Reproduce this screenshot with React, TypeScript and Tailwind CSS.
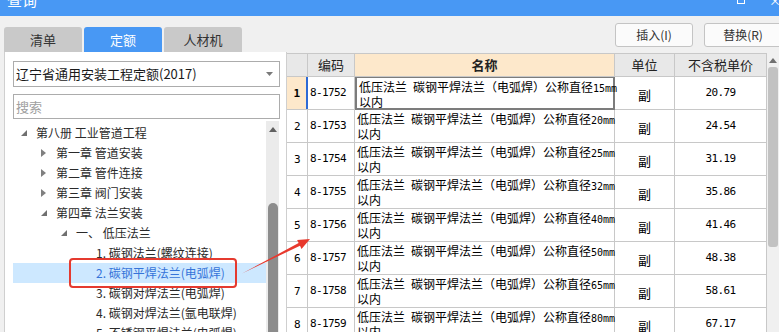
import React from "react";

const rows = [
  { code: "8-1752", size: "15", price: "20.79" },
  { code: "8-1753", size: "20", price: "24.54" },
  { code: "8-1754", size: "25", price: "31.19" },
  { code: "8-1755", size: "32", price: "35.86" },
  { code: "8-1756", size: "40", price: "41.46" },
  { code: "8-1757", size: "50", price: "48.38" },
  { code: "8-1758", size: "65", price: "58.61" },
  { code: "8-1759", size: "80", price: "67.17" },
];

type Node = { level: number; text: string; icon: "open" | "closed" | "none"; selected?: boolean };

const tree: Node[] = [
  { level: 0, text: "第八册 工业管道工程", icon: "open" },
  { level: 1, text: "第一章 管道安装", icon: "closed" },
  { level: 1, text: "第二章 管件连接", icon: "closed" },
  { level: 1, text: "第三章 阀门安装", icon: "closed" },
  { level: 1, text: "第四章 法兰安装", icon: "open" },
  { level: 2, text: "一、  低压法兰", icon: "open" },
  { level: 3, text: "1. 碳钢法兰(螺纹连接)", icon: "none" },
  { level: 3, text: "2. 碳钢平焊法兰(电弧焊)", icon: "none", selected: true },
  { level: 3, text: "3. 碳钢对焊法兰(电弧焊)", icon: "none" },
  { level: 3, text: "4. 碳钢对焊法兰(氩电联焊)", icon: "none" },
  { level: 3, text: "5. 不锈钢平焊法兰(电弧焊)", icon: "none" },
];

const indent = ["pl-[5px]", "pl-[25px]", "pl-[45px]", "pl-[65px]"];

function Tri({ kind }: { kind: "open" | "closed" | "none" }) {
  if (kind === "open")
    return (
      <svg width="6" height="6" viewBox="0 0 6 6">
        <polygon points="6,0 6,6 0,6" fill="#707070" />
      </svg>
    );
  if (kind === "closed")
    return (
      <svg width="5" height="8" viewBox="0 0 5 8">
        <polygon points="0,0 5,4 0,8" fill="#808080" />
      </svg>
    );
  return null;
}

const mono = "font-['DejaVu_Sans_Mono',monospace] text-[11px] tracking-[-0.6px]";

export default function App() {
  return (
    <div className="relative w-[779px] h-[332px] overflow-hidden bg-[#f0f0f0] font-['Noto_Sans_CJK_SC',sans-serif] text-[#222]">
      {/* title bar */}
      <div className="relative h-[16px] bg-[#4898f4] overflow-hidden flex">
        <div className="pl-[7px] -mt-[9px] text-[15px] leading-[18px] text-white">查询</div>
        <div className="flex-1" />
        <div className="-mt-[6px] mr-[24px] w-[8px] h-[10px] border-[1.5px] border-white" />
        <div className="-mt-[4px] text-white text-[12px] leading-[10px] -mr-[2px]">×</div>
      </div>

      <div className="flex h-[316px]">
        {/* left column */}
        <div className="w-[287px] pl-[4px] pt-[11px] flex flex-col">
          <div className="flex gap-[2px] h-[25px] shrink-0">
            <div className="w-[78px] rounded-t-[3px] bg-[#c9c9c9] flex items-center justify-center text-[13px] text-[#333]">清单</div>
            <div className="w-[78px] rounded-t-[3px] bg-[#4898f4] flex items-center justify-center text-[13px] text-white">定额</div>
            <div className="w-[78px] rounded-t-[3px] bg-[#c9c9c9] flex items-center justify-center text-[13px] text-[#333]">人材机</div>
          </div>
          <div className="flex-1 min-h-0 bg-white border-l border-r border-[#cfcfcf] pl-[8px] pt-[9px] flex flex-col overflow-hidden">
            <div className="shrink-0 w-[267px] h-[26px] border border-[#acacac] flex items-center pl-[2px] pr-[6px] text-[13px] text-[#1a1a1a]">
              <span className="flex-1">辽宁省通用安装工程定额(2017)</span>
              <svg width="7" height="4" viewBox="0 0 7 4">
                <polygon points="0,0 7,0 3.5,4" fill="#7a7a7a" />
              </svg>
            </div>
            <div className="shrink-0 mt-[7px] w-[267px] h-[25px] border border-[#acacac] flex items-center pl-[2px] text-[13px] text-[#a0a0a0]">
              搜索
            </div>
            <div className="mt-[2px] flex flex-1 min-h-0">
              <div className="w-[253px] pt-[2px]">
                {tree.map((n, i) => (
                  <div
                    key={i}
                    className={`h-[20px] shrink-0 flex items-center text-[12px] whitespace-nowrap ${indent[n.level]} ${
                      n.selected ? "bg-[#cde8ff] text-[#3574d9]" : "text-[#2a2a2a]"
                    }`}
                  >
                    <div className="w-[18px] pl-[3px] flex items-center">
                      <Tri kind={n.icon} />
                    </div>
                    <span>{n.text}</span>
                  </div>
                ))}
              </div>
              <div className="w-[13px] bg-[#ebebeb] flex flex-col items-center">
                <div className="h-[14px] flex items-center pt-[2px]">
                  <svg width="8" height="5" viewBox="0 0 8 5">
                    <polygon points="0,5 8,5 4,0" fill="#606060" />
                  </svg>
                </div>
                <div className="mt-[68px] flex-1 w-[10px] bg-[#8c8c8c] rounded-t-[5px]" />
              </div>
            </div>
          </div>
        </div>

        {/* right column */}
        <div className="flex-1 flex flex-col overflow-hidden">
          <div className="shrink-0 h-[37px] pt-[7px] pl-[328px] flex gap-[11px]">
            <div className="shrink-0 w-[78px] h-[24px] rounded-[3px] border border-[#c4c4c4] bg-[#fbfbfb] flex items-center justify-center text-[12px] text-[#333]">插入(I)</div>
            <div className="shrink-0 w-[78px] h-[24px] rounded-[3px] border border-[#c4c4c4] bg-[#fbfbfb] flex items-center justify-center text-[12px] text-[#333]">替换(R)</div>
          </div>
          <div className="flex flex-1 min-h-0 bg-white">
            <div className="w-[480px] flex flex-col">
              {/* header */}
              <div className="shrink-0 flex h-[24px] border-t border-b border-[#c8c8c8] text-[13px]">
                <div className="w-[21px] bg-[#e8e8e8] border-r border-[#c8c8c8]" />
                <div className="w-[47px] bg-[#e8e8e8] border-r border-[#c8c8c8] flex items-center justify-center text-[#222]">编码</div>
                <div className="w-[260px] bg-[#fde8cb] border-r border-[#c8c8c8] flex items-center justify-center font-bold text-[#222]">名称</div>
                <div className="w-[60px] bg-[#e8e8e8] border-r border-[#c8c8c8] flex items-center justify-center text-[#222]">单位</div>
                <div className="w-[92px] bg-[#e8e8e8] border-r border-[#c8c8c8] flex items-center justify-center text-[#222]">不含税单价</div>
              </div>
              {rows.map((r, i) => {
                const sel = i === 0;
                return (
                  <div key={r.code} className="flex h-[33px] shrink-0 border-b border-[#c8c8c8] text-black">
                    <div
                      className={`w-[21px] flex items-center justify-center pt-[3px] ${mono} ${
                        sel ? "bg-[#fde8cb] font-bold border-r-2 border-[#2d6ad6]" : "border-r border-[#c8c8c8]"
                      }`}
                    >
                      {i + 1}
                    </div>
                    <div className={`w-[47px] border-r border-[#c8c8c8] flex items-center pl-[2px] ${mono}`}>{r.code}</div>
                    <div
                      className={`w-[260px] pl-[2px] pt-[2px] text-[12px] leading-[13px] text-black ${
                        sel ? "border-2 border-t border-[#7c7c7c] -mb-px" : "border-r border-[#c8c8c8]"
                      }`}
                    >
                      <div className="whitespace-nowrap">
                        低压法兰<span className="ml-[6px]">碳钢平焊法兰（电弧焊）公称直径</span>
                        <span className="font-['DejaVu_Sans_Mono',monospace] text-[10px] text-black">{r.size}mm</span>
                      </div>
                      <div>以内</div>
                    </div>
                    <div className="w-[60px] border-r border-[#c8c8c8] flex items-center justify-center pt-[3px] text-[13px]">副</div>
                    <div className={`w-[92px] border-r border-[#c8c8c8] flex items-center justify-center ${mono}`}>{r.price}</div>
                  </div>
                );
              })}
            </div>
            <div className="w-[12px] bg-[#f0f0f0] flex flex-col items-center">
              <div className="h-[14px] flex items-center">
                <svg width="8" height="5" viewBox="0 0 8 5">
                  <polygon points="0,5 8,5 4,0" fill="#707070" />
                </svg>
              </div>
              <div className="w-[10px] h-[180px] bg-[#c2c2c2] rounded-[3px]" />
            </div>
          </div>
        </div>
      </div>

      {/* annotations */}
      <div className="absolute left-[69px] top-[258px] w-[168px] h-[30px] border-2 border-[#e53a2f] rounded-[4px]" />
      <svg className="absolute left-0 top-0" width="779" height="332" viewBox="0 0 779 332">
        <polygon
          points="242,273.5 298.6,243.1 297.1,239.9 310,239 301.5,248.9 300,245.7"
          fill="#e8392d"
        />
      </svg>
    </div>
  );
}
